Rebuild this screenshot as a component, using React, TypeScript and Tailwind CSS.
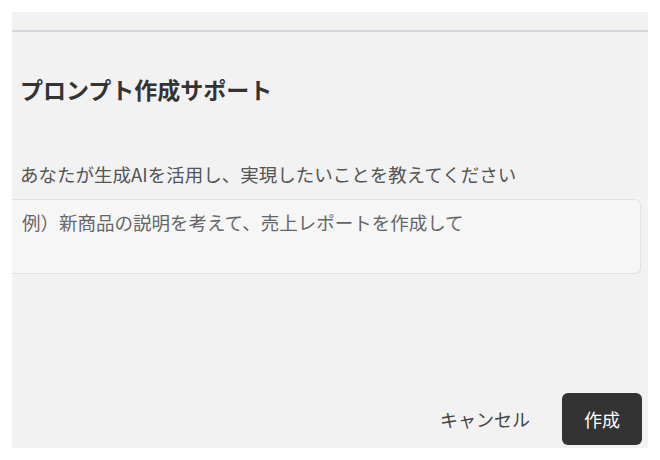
import React from 'react';

const font = { fontFamily: '"Noto Sans CJK JP", "Noto Sans", sans-serif' };

export default function App() {
  return (
    <div className="w-[660px] h-[460px] bg-white p-[12px]" style={font}>
      <div className="flex h-[436px] w-[636px] flex-col bg-[#f2f2f2]">
        {/* top strip */}
        <div className="h-[20px] border-b-2 border-[#d4d8dd]" />

        {/* Title */}
        <h1 className="mt-[41px] pl-[8px] text-[23px] font-bold leading-[32px] text-[#333]">
          プロンプト作成サポート
        </h1>

        {/* Label */}
        <label className="mt-[56px] pl-[8px] text-[18.5px] leading-[26px] text-[#555]">
          あなたが生成AIを活用し、実現したいことを教えてください
        </label>

        {/* Textarea */}
        <div className="mt-[12px] mr-[7px]">
          <textarea
            className="block h-[75px] w-full resize-none rounded-r-md border border-l-0 border-[#e2e2e2] bg-[#f6f6f6] pl-[10px] pt-[9px] text-[18.5px] leading-[26px] text-[#333] outline-none placeholder:text-[#666]"
            style={font}
            placeholder="例）新商品の説明を考えて、売上レポートを作成して"
          />
        </div>

        <div className="flex-1" />

        {/* Footer */}
        <div className="mb-[3px] mr-[6px] flex items-center justify-end gap-[32px]">
          <button className="text-[18px] text-[#444]" style={font}>
            キャンセル
          </button>
          <button
            className="h-[52px] w-[80px] rounded-md bg-[#333333] text-[18px] text-white"
            style={font}
          >
            作成
          </button>
        </div>
      </div>
    </div>
  );
}
